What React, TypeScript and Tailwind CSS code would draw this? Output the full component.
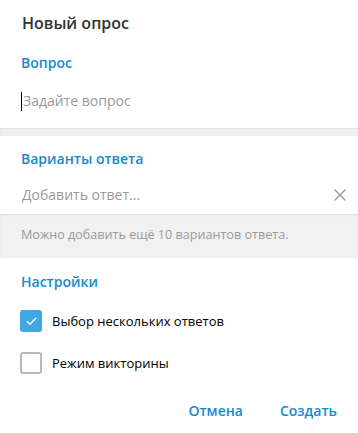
import { Check, X } from 'lucide-react'

const font = { fontFamily: '"Open Sans", "Noto Sans", sans-serif' }

function SectionTitle({ children, className = '' }: { children: string; className?: string }) {
  return (
    <div className={`px-[21px] text-[14px] leading-[20px] font-semibold text-[#168acd] ${className}`}>
      {children}
    </div>
  )
}

function CheckRow({ label, checked }: { label: string; checked?: boolean }) {
  return (
    <div className="flex items-center h-[22px] pl-[20px]">
      {checked ? (
        <div className="w-[22px] h-[22px] rounded-[3px] bg-[#40a7e3] flex items-center justify-center">
          <Check size={13} strokeWidth={2.4} className="text-white" />
        </div>
      ) : (
        <div className="w-[22px] h-[22px] rounded-[3px] border-2 border-[#b8b8b8] bg-white" />
      )}
      <span className="ml-[10px] text-[13px] leading-[20px] text-[#000]">{label}</span>
    </div>
  )
}

export default function App() {
  return (
    <div className="w-[358px] h-[433px] bg-white overflow-hidden" style={font}>
      <div className="pt-[12px] px-[22px] text-[16px] leading-[22px] font-semibold text-[#333]">
        Новый опрос
      </div>

      <SectionTitle className="mt-[19px]">Вопрос</SectionTitle>

      <div className="mt-[18px] px-[21px] flex items-center h-[20px]">
        <div className="w-px h-[19px] bg-black" />
        <span className="ml-px text-[14px] leading-[20px] text-[#999]">Задайте вопрос</span>
      </div>

      <div className="mt-[17px] h-[8px] bg-[#f1f1f1] shadow-[inset_0_1px_2px_rgba(0,0,0,0.08)]" />

      <SectionTitle className="mt-[13px]">Варианты ответа</SectionTitle>

      <div className="mt-[16px] pl-[22px] pr-[8px] flex items-center justify-between h-[20px]">
        <span className="text-[14px] leading-[20px] text-[#999]">Добавить ответ...</span>
        <X size={20} strokeWidth={1.6} className="text-[#9a9a9a]" />
      </div>

      <div className="mt-[9px] h-[44px] bg-[#f1f1f1] shadow-[inset_0_1px_2px_rgba(0,0,0,0.08)] px-[21px] pt-[13px]">
        <div className="text-[12.6px] leading-[16px] text-[#999]">Можно добавить ещё 10 вариантов ответа.</div>
      </div>

      <SectionTitle className="mt-[14px]">Настройки</SectionTitle>

      <div className="mt-[18px] flex flex-col gap-[20px]">
        <CheckRow label="Выбор нескольких ответов" checked />
        <CheckRow label="Режим викторины" />
      </div>

      <div className="mt-[27px] flex justify-end gap-[37px] pr-[21px]">
        <span className="text-[14px] leading-[20px] font-semibold text-[#168acd]">Отмена</span>
        <span className="text-[14px] leading-[20px] font-semibold text-[#168acd]">Создать</span>
      </div>
    </div>
  )
}
